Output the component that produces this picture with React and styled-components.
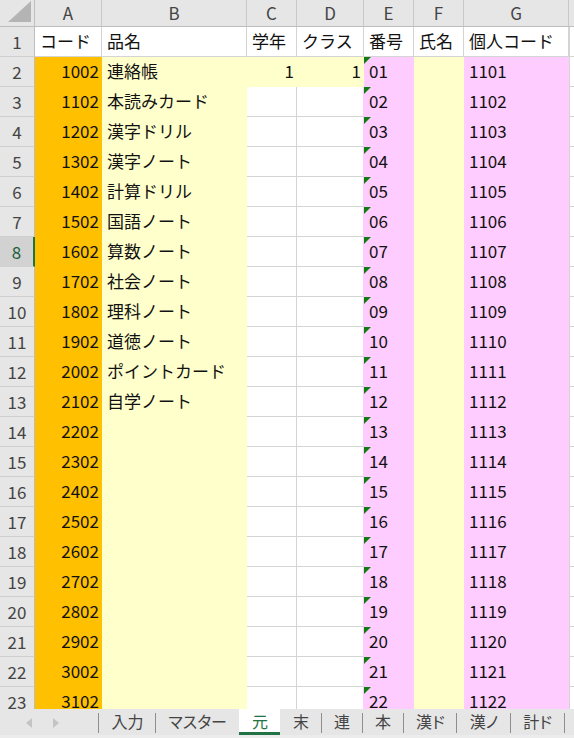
import React from "react";
import styled, { createGlobalStyle } from "styled-components";

const GlobalStyle = createGlobalStyle`
  html, body {
    margin: 0;
    padding: 0;
    background: #fff;
    font-family: "Noto Sans CJK JP", "Noto Sans", sans-serif;
  }
`;

const GRID = "#d4d4d4";
const ORANGE = "#ffc000";
const YELLOW = "#ffffcc";
const PINK = "#ffccff";
const GREEN = "#217346";

const Page = styled.div`
  width: 574px;
  height: 738px;
  overflow: hidden;
  display: flex;
  flex-direction: column;
`;

const Sheet = styled.div`
  height: 709px;
  flex-shrink: 0;
  overflow: hidden;
  display: grid;
  grid-template-columns: 35px 67px 145px 50px 67px 50px 50px 105px 1fr;
  grid-template-rows: 27px;
  grid-auto-rows: 30px;
`;

const Corner = styled.div`
  background: #e6e6e6;
  border-right: 1px solid #bdbdbd;
  border-bottom: 1px solid #bdbdbd;
  box-sizing: border-box;
  display: flex;
  align-items: flex-end;
  justify-content: flex-end;
  padding: 0 3px 4px 0;
`;

const ColHead = styled.div`
  background: #e6e6e6;
  color: #444;
  font-size: 17px;
  box-sizing: border-box;
  border-right: 1px solid #c8c8c8;
  border-bottom: 1px solid #bdbdbd;
  display: flex;
  align-items: center;
  justify-content: center;
  line-height: 1;
  padding-bottom: 1px;
`;

const RowHead = styled.div`
  background: ${(p) => (p.$selected ? "#d2d2d2" : "#e6e6e6")};
  color: ${(p) => (p.$selected ? "#1d5f3a" : "#444")};
  font-size: 17px;
  box-sizing: border-box;
  border-right: ${(p) => (p.$selected ? `2px solid ${GREEN}` : "1px solid #bdbdbd")};
  border-bottom: 1px solid #cfcfcf;
  display: flex;
  align-items: center;
  justify-content: center;
  line-height: 1;
  padding-bottom: 1px;
`;

const Cell = styled.div`
  position: relative;
  background: ${(p) => p.$fill};
  box-sizing: border-box;
  border-right: 1px solid ${(p) => p.$right};
  border-bottom: 1px solid ${(p) => p.$bottom};
  font-size: 17px;
  color: #111;
  line-height: 1;
  white-space: nowrap;
  overflow: hidden;
  display: flex;
  align-items: center;
  justify-content: ${(p) => (p.$align === "right" ? "flex-end" : "flex-start")};
  padding: 0 2px 2px 5px;

  ${(p) =>
    p.$flag &&
    `
    &::before {
      content: "";
      position: absolute;
      left: 0;
      top: 0;
      width: 0;
      height: 0;
      border-top: 7px solid #107c10;
      border-right: 7px solid transparent;
    }
  `}
`;

const TabBar = styled.div`
  height: 29px;
  flex-shrink: 0;
  background: #e6e6e6;
  display: flex;
  align-items: stretch;
  box-sizing: border-box;
  border-bottom: 3px solid #ececec;
`;

const Nav = styled.div`
  width: 99px;
  display: flex;
  align-items: center;
  padding-left: 26px;
  gap: 21px;
  box-sizing: border-box;
  border-right: 1px solid #8e8e8e;
  margin: 4px 0 2px;
`;

const Arrow = styled.span`
  width: 0;
  height: 0;
  border-top: 5px solid transparent;
  border-bottom: 5px solid transparent;
  ${(p) =>
    p.$dir === "left"
      ? "border-right: 6px solid #c4c4c4;"
      : "border-left: 6px solid #c4c4c4;"}
`;

const Tab = styled.div`
  display: flex;
  align-items: center;
  justify-content: center;
  padding: 1px 12.5px 0;
  font-size: 16px;
  line-height: 1;
  font-feature-settings: "palt";
  box-sizing: border-box;
  color: ${(p) => (p.$active ? GREEN : "#444")};
  background: ${(p) => (p.$active ? "#fff" : "transparent")};
  border-bottom: 3px solid ${(p) => (p.$active ? GREEN : "transparent")};
  position: relative;
  white-space: nowrap;

  ${(p) =>
    p.$sep &&
    `
    &::after {
      content: "";
      position: absolute;
      right: 0;
      top: 4px;
      bottom: -1px;
      width: 1px;
      background: #8e8e8e;
    }
  `}
`;

const items = [
  "連絡帳",
  "本読みカード",
  "漢字ドリル",
  "漢字ノート",
  "計算ドリル",
  "国語ノート",
  "算数ノート",
  "社会ノート",
  "理科ノート",
  "道徳ノート",
  "ポイントカード",
  "自学ノート",
];

const letters = ["A", "B", "C", "D", "E", "F", "G"];
const header = ["コード", "品名", "学年", "クラス", "番号", "氏名", "個人コード"];

function rowData(r) {
  if (r === 1) {
    return header.map((t) => ({ text: t, fill: null }));
  }
  const i = r - 2;
  return [
    { text: String(1002 + i * 100), fill: ORANGE, align: "right" },
    { text: items[i] || "", fill: YELLOW },
    { text: r === 2 ? "1" : "", fill: r === 2 ? YELLOW : null, align: "right" },
    { text: r === 2 ? "1" : "", fill: r === 2 ? YELLOW : null, align: "right" },
    { text: String(r - 1).padStart(2, "0"), fill: PINK, flag: true },
    { text: "", fill: YELLOW },
    { text: String(1100 + r - 1), fill: PINK },
  ];
}

const tabs = ["入力", "マスター", "元", "末", "連", "本", "漢ド", "漢ノ", "計ド"];

export default function App() {
  const rows = Array.from({ length: 23 }, (_, k) => k + 1);
  return (
    <Page>
      <GlobalStyle />
      <Sheet>
        <Corner>
          <svg width="23" height="21" viewBox="0 0 23 21">
            <polygon points="23,0 23,21 0,21" fill="#b4b4b4" />
          </svg>
        </Corner>
        {letters.map((l) => (
          <ColHead key={l}>{l}</ColHead>
        ))}
        <ColHead />
        {rows.map((r) => {
          const cells = rowData(r);
          return (
            <React.Fragment key={r}>
              <RowHead $selected={r === 8}>{r}</RowHead>
              {cells.map((c, j) => {
                const next = cells[j + 1];
                const right = c.fill
                  ? c.fill
                  : next && next.fill
                  ? next.fill
                  : GRID;
                const bottom = c.fill ? c.fill : GRID;
                return (
                  <Cell
                    key={j}
                    $fill={c.fill || "#fff"}
                    $right={right}
                    $bottom={bottom}
                    $align={c.align}
                    $flag={c.flag}
                  >
                    {c.text}
                  </Cell>
                );
              })}
              <Cell $fill="#fff" $right={GRID} $bottom={GRID} style={{ borderLeft: `1px solid ${GRID}` }} />
            </React.Fragment>
          );
        })}
      </Sheet>
      <TabBar>
        <Nav>
          <Arrow $dir="left" />
          <Arrow $dir="right" />
        </Nav>
        {tabs.map((t, i) => (
          <Tab
            key={t}
            $active={t === "元"}
            $sep={t !== "元" && tabs[i + 1] !== "元"}
          >
            {t}
          </Tab>
        ))}
      </TabBar>
    </Page>
  );
}
